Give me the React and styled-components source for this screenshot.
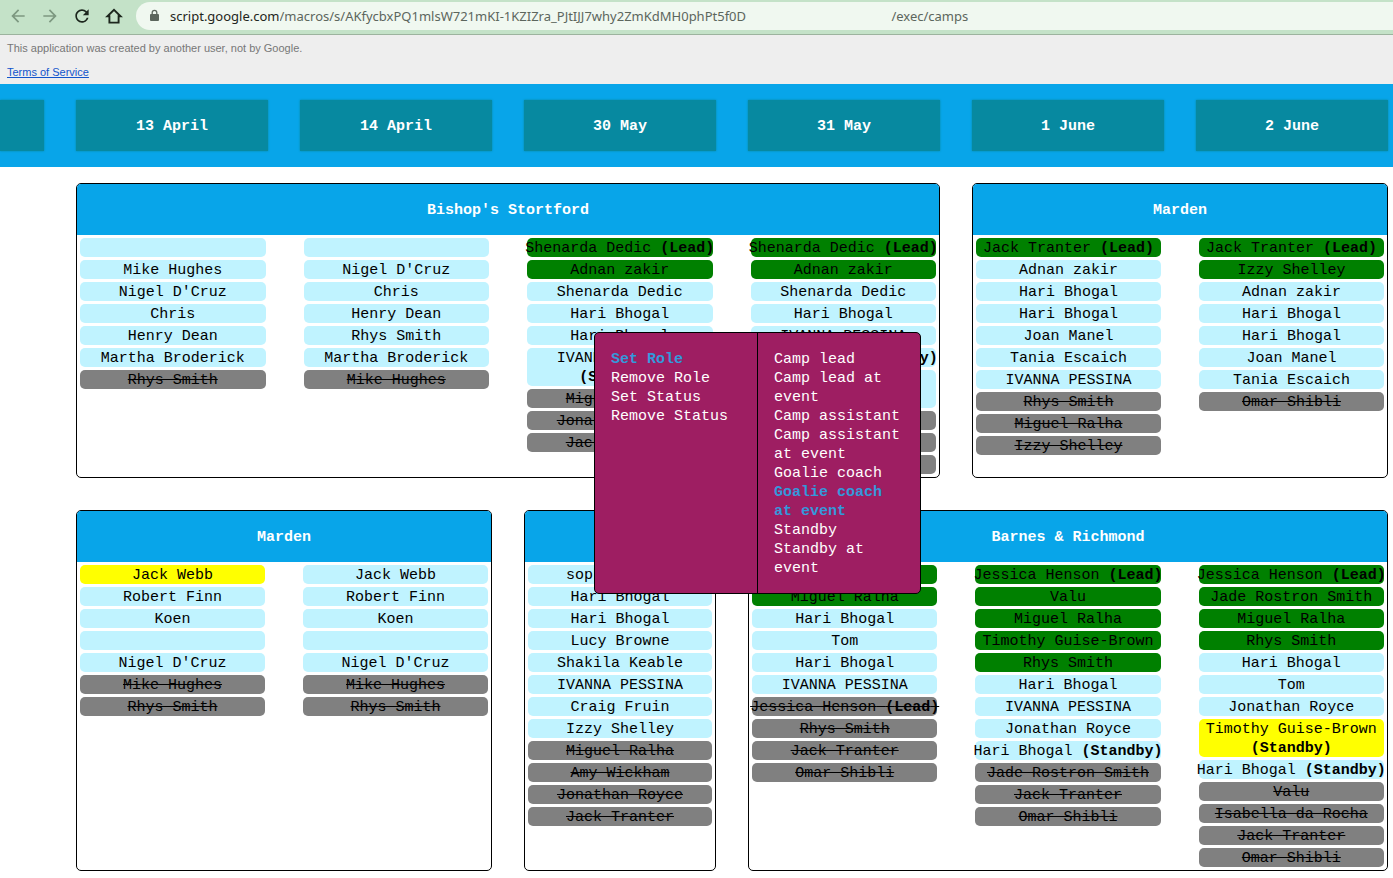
import React from "react";
import styled, { createGlobalStyle, css } from "styled-components";
import { MdArrowBack, MdArrowForward, MdRefresh } from "react-icons/md";

const GlobalStyle = createGlobalStyle`
  *, *::before, *::after { box-sizing: border-box; }
  body {
    margin: 0;
    background: #fff;
    color: #000;
    font-family: "Liberation Mono", monospace;
    font-size: 15px;
    line-height: 19px;
  }
  h2, h3, p, ul, ol { margin: 0; padding: 0; font-size: inherit; }
  ul, ol { list-style: none; }
`;

const mono = `"Liberation Mono", monospace`;

const BrowserBar = styled.nav`
  display: flex;
  align-items: center;
  gap: 12px;
  height: 35px;
  padding: 0 0 3px 8px;
  background: #c4e2c8;
  border-bottom: 1px solid #9cb39e;
`;

const NavButton = styled.button`
  display: flex;
  flex: none;
  padding: 0;
  border: 0;
  background: none;
  color: ${(p) => (p.$muted ? "#7d9880" : "#1c261d")};
`;

const AddressField = styled.div`
  display: flex;
  flex: 1;
  align-items: center;
  height: 28px;
  padding-left: 12px;
  border-radius: 14px 0 0 14px;
  background: #f0f8f0;
  color: #5c665d;
  font: 13px/20px "Noto Sans", sans-serif;
`;

const Host = styled.label`
  padding-left: 9px;
  color: #1f2620;
`;

const PathInput = styled.input`
  flex: 1;
  min-width: 0;
  padding: 0;
  border: 0;
  outline: 0;
  background: none;
  color: #5c665d;
  font: inherit;
`;

const Notice = styled.aside`
  display: flex;
  flex-direction: column;
  align-items: flex-start;
  gap: 8px;
  padding: 5px 7px 4px;
  background: #eee;
  color: #777;
  font: 11px/16px "Liberation Sans", sans-serif;
`;

const TermsLink = styled.a`
  color: #1155cc;
`;

const columns = css`
  display: grid;
  grid-template-columns: 44px repeat(6, minmax(192px, 1fr));
  column-gap: 32px;
  padding: 16px 5px 16px 0;
`;

const DateHeader = styled.header`
  ${columns}
  background: #08a5e9;
`;

const DateTile = styled.h2`
  min-height: 51px;
  padding: 17px 0 15px;
  background: #0789a0;
  box-shadow: 0 0 2px #0789a0;
  color: #fff;
  text-align: center;
`;

const Board = styled.main`
  ${columns}
  position: relative;
  row-gap: 32px;
  padding-bottom: 7px;
`;

const CampCard = styled.section`
  grid-column: ${(p) => p.$from} / span ${(p) => p.$days};
  overflow: hidden;
  border: 1px solid #000;
  border-radius: 5px;
`;

const CampTitle = styled.h3`
  min-height: 51px;
  padding: 17px 0 15px;
  background: #08a5e9;
  color: #fff;
  text-align: center;
`;

const Days = styled.div`
  display: grid;
  grid-template-columns: repeat(${(p) => p.$days}, minmax(0, 1fr));
  column-gap: 38px;
  padding: 3px;
`;

const DayList = styled.ul`
  display: flex;
  flex-direction: column;
  gap: 3px;
`;

const statusColors = {
  open: "#c0f3ff",
  confirmed: "#008000",
  pending: "#ffff00",
  declined: "#808080",
};

const Coach = styled.li`
  display: flex;
  flex-direction: ${(p) => (p.$stacked ? "column" : "row")};
  align-items: ${(p) => (p.$stacked ? "center" : "flex-start")};
  justify-content: ${(p) => (p.$stacked ? "flex-start" : "center")};
  height: ${(p) => (p.$stacked ? 38 : 19)}px;
  padding-top: 1px;
  border-radius: 5px;
  background: ${(p) => statusColors[p.$status]};
  white-space: pre;
  text-decoration: ${(p) => (p.$status === "declined" ? "line-through" : "none")};
`;

const Menu = styled.div`
  position: absolute;
  top: 165px;
  left: 594px;
  display: flex;
  overflow: hidden;
  border: 1px solid #000;
  border-radius: 5px;
  background: #9e1e62;
`;

const MenuColumn = styled.ul`
  && {
    box-sizing: content-box;
    width: 130px;
    padding: 17px 16px 15px;
  }

  & + & {
    border-left: 1px solid #000;
  }
`;

const MenuItem = styled.button`
  display: block;
  width: 100%;
  padding: 0;
  border: 0;
  background: none;
  color: ${(p) => (p.$active ? "#3498db" : "#fff")};
  font: ${(p) => (p.$active ? 700 : 400)} 15px/19px ${mono};
  text-align: left;
`;

const dates = ["", "13 April", "14 April", "30 May", "31 May", "1 June", "2 June"];

const o = (name, role, stacked) => ({ name, role, stacked, status: "open" });
const c = (name, role) => ({ name, role, status: "confirmed" });
const p = (name, role, stacked) => ({ name, role, stacked, status: "pending" });
const d = (name, role) => ({ name, role, status: "declined" });

const camps = [
  {
    title: "Bishop's Stortford",
    from: 2,
    days: [
      [o(""), o("Mike Hughes"), o("Nigel D'Cruz"), o("Chris"), o("Henry Dean"), o("Martha Broderick"), d("Rhys Smith")],
      [o(""), o("Nigel D'Cruz"), o("Chris"), o("Henry Dean"), o("Rhys Smith"), o("Martha Broderick"), d("Mike Hughes")],
      [
        c("Shenarda Dedic", "Lead"), c("Adnan zakir"), o("Shenarda Dedic"), o("Hari Bhogal"), o("Hari Bhogal"),
        o("IVANNA PESSINA", "Standby", true), d("Miguel Ralha"), d("Jonathan Royce"), d("Jack Tranter"),
      ],
      [
        c("Shenarda Dedic", "Lead"), c("Adnan zakir"), o("Shenarda Dedic"), o("Hari Bhogal"), o("IVANNA PESSINA"),
        o("Hari Bhogal", "Standby"), o("", "", true), d(""), d(""), d(""),
      ],
    ],
  },
  {
    title: "Marden",
    from: 6,
    days: [
      [
        c("Jack Tranter", "Lead"), o("Adnan zakir"), o("Hari Bhogal"), o("Hari Bhogal"), o("Joan Manel"),
        o("Tania Escaich"), o("IVANNA PESSINA"), d("Rhys Smith"), d("Miguel Ralha"), d("Izzy Shelley"),
      ],
      [
        c("Jack Tranter", "Lead"), c("Izzy Shelley"), o("Adnan zakir"), o("Hari Bhogal"), o("Hari Bhogal"),
        o("Joan Manel"), o("Tania Escaich"), d("Omar Shibli"),
      ],
    ],
  },
  {
    title: "Marden",
    from: 2,
    days: [
      [p("Jack Webb"), o("Robert Finn"), o("Koen"), o(""), o("Nigel D'Cruz"), d("Mike Hughes"), d("Rhys Smith")],
      [o("Jack Webb"), o("Robert Finn"), o("Koen"), o(""), o("Nigel D'Cruz"), d("Mike Hughes"), d("Rhys Smith")],
    ],
  },
  {
    title: "",
    from: 4,
    days: [
      [
        o("sophie brown"), o("Hari Bhogal"), o("Hari Bhogal"), o("Lucy Browne"), o("Shakila Keable"),
        o("IVANNA PESSINA"), o("Craig Fruin"), o("Izzy Shelley"), d("Miguel Ralha"), d("Amy Wickham"),
        d("Jonathan Royce"), d("Jack Tranter"),
      ],
    ],
  },
  {
    title: "Barnes & Richmond",
    from: 5,
    days: [
      [
        c(""), c("Miguel Ralha"), o("Hari Bhogal"), o("Tom"), o("Hari Bhogal"), o("IVANNA PESSINA"),
        d("Jessica Henson", "Lead"), d("Rhys Smith"), d("Jack Tranter"), d("Omar Shibli"),
      ],
      [
        c("Jessica Henson", "Lead"), c("Valu"), c("Miguel Ralha"), c("Timothy Guise-Brown"), c("Rhys Smith"),
        o("Hari Bhogal"), o("IVANNA PESSINA"), o("Jonathan Royce"), o("Hari Bhogal", "Standby"),
        d("Jade Rostron Smith"), d("Jack Tranter"), d("Omar Shibli"),
      ],
      [
        c("Jessica Henson", "Lead"), c("Jade Rostron Smith"), c("Miguel Ralha"), c("Rhys Smith"), o("Hari Bhogal"),
        o("Tom"), o("Jonathan Royce"), p("Timothy Guise-Brown", "Standby", true), o("Hari Bhogal", "Standby"),
        d("Valu"), d("Isabella da Rocha"), d("Jack Tranter"), d("Omar Shibli"),
      ],
    ],
  },
];

const actions = ["Set Role", "Remove Role", "Set Status", "Remove Status"];
const roles = [
  "Camp lead",
  "Camp lead at event",
  "Camp assistant",
  "Camp assistant at event",
  "Goalie coach",
  "Goalie coach at event",
  "Standby",
  "Standby at event",
];

const path =
  "/macros/s/AKfycbxPQ1mlsW721mKI-1KZIZra_PJtIJJ7why2ZmKdMH0phPt5f0D" + " ".repeat(43) + "/exec/camps";

function HomeIcon() {
  return (
    <svg width="20" height="20" viewBox="0 0 20 20" fill="none" stroke="currentColor" strokeWidth="1.9" aria-hidden="true">
      <path d="M4 10.200H5.400V16.600h9.200v-6.400H16.600L10 3.800L3.400 10.200z" />
    </svg>
  );
}

function LockIcon() {
  return (
    <svg width="13" height="13" viewBox="0 0 13 13" aria-hidden="true">
      <rect x="2" y="5" width="9" height="7" rx="1" fill="currentColor" />
      <path d="M4.200 5.500V3.600a2.300 2.300 0 0 1 4.600 0v1.900" fill="none" stroke="currentColor" strokeWidth="1.300" />
    </svg>
  );
}

function CoachEntry({ name, role, stacked, status }) {
  return (
    <Coach $status={status} $stacked={stacked}>
      <span>{name}{role && !stacked ? " " : ""}</span>
      {role && <b>({role})</b>}
    </Coach>
  );
}

function MenuList({ items, active, label }) {
  return (
    <MenuColumn aria-label={label}>
      {items.map((item) => (
        <li key={item}>
          <MenuItem type="button" $active={item === active}>{item}</MenuItem>
        </li>
      ))}
    </MenuColumn>
  );
}

export default function App() {
  return (
    <>
      <GlobalStyle />
      <BrowserBar>
        <NavButton type="button" aria-label="Back" $muted><MdArrowBack size={20} /></NavButton>
        <NavButton type="button" aria-label="Forward" $muted><MdArrowForward size={20} /></NavButton>
        <NavButton type="button" aria-label="Reload"><MdRefresh size={20} /></NavButton>
        <NavButton type="button" aria-label="Home"><HomeIcon /></NavButton>
        <AddressField>
          <LockIcon />
          <Host htmlFor="address">script.google.com</Host>
          <PathInput id="address" type="text" defaultValue={path} spellCheck={false} />
        </AddressField>
      </BrowserBar>
      <Notice>
        <p>This application was created by another user, not by Google.</p>
        <TermsLink href="#terms">Terms of Service</TermsLink>
      </Notice>
      <DateHeader>
        {dates.map((date) => <DateTile key={date}>{date}</DateTile>)}
      </DateHeader>
      <Board>
        {camps.map((camp) => (
          <CampCard key={camp.from + camp.title} $from={camp.from} $days={camp.days.length}>
            <CampTitle>{camp.title}</CampTitle>
            <Days $days={camp.days.length}>
              {camp.days.map((day, i) => (
                <DayList key={i}>
                  {day.map((coach, j) => <CoachEntry key={j} {...coach} />)}
                </DayList>
              ))}
            </Days>
          </CampCard>
        ))}
        <Menu>
          <MenuList label="Actions" items={actions} active="Set Role" />
          <MenuList label="Roles" items={roles} active="Goalie coach at event" />
        </Menu>
      </Board>
    </>
  );
}
